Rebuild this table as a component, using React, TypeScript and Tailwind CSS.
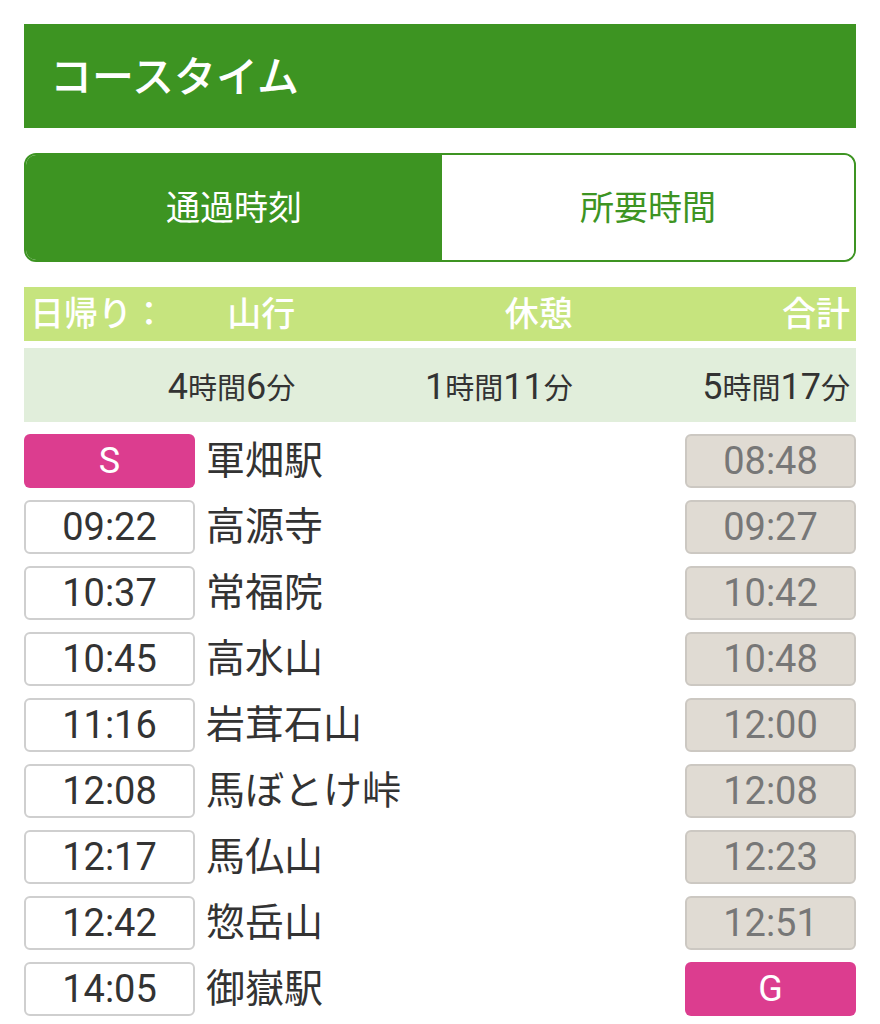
import React from 'react';

const rows = [
  { start: 'S', name: '軍畑駅', end: '08:48' },
  { start: '09:22', name: '高源寺', end: '09:27' },
  { start: '10:37', name: '常福院', end: '10:42' },
  { start: '10:45', name: '高水山', end: '10:48' },
  { start: '11:16', name: '岩茸石山', end: '12:00' },
  { start: '12:08', name: '馬ぼとけ峠', end: '12:08' },
  { start: '12:17', name: '馬仏山', end: '12:23' },
  { start: '12:42', name: '惣岳山', end: '12:51' },
  { start: '14:05', name: '御嶽駅', end: 'G' },
];

const Duration = ({ h, m }: { h: string; m: string }) => (
  <div className="flex items-baseline justify-end pr-[6px] pt-[4px] text-[#333]">
    <span className="text-[36px]">{h}</span>
    <span className="text-[29px]">時間</span>
    <span className="text-[36px]">{m}</span>
    <span className="text-[29px]">分</span>
  </div>
);

const StartBox = ({ value }: { value: string }) => {
  if (value === 'S' || value === 'G') {
    return (
      <div className="w-[171px] h-[54px] rounded-md bg-[#dc3d8f] flex items-center justify-center text-white text-[36px] leading-none">
        {value}
      </div>
    );
  }
  return (
    <div className="w-[171px] h-[54px] rounded-md border-2 border-[#cfcfcf] bg-white flex items-center justify-center text-[#333] text-[38px] leading-none">
      {value}
    </div>
  );
};

const EndBox = ({ value }: { value: string }) => {
  if (value === 'S' || value === 'G') {
    return (
      <div className="ml-auto w-[171px] h-[54px] rounded-md bg-[#dc3d8f] flex items-center justify-center text-white text-[36px] leading-none">
        {value}
      </div>
    );
  }
  return (
    <div className="ml-auto w-[171px] h-[54px] rounded-md border-2 border-[#ccc8c2] bg-[#e0dbd3] flex items-center justify-center text-[#777] text-[38px] leading-none">
      {value}
    </div>
  );
};

export default function App() {
  return (
    <div className="w-[880px] px-6 pt-6 bg-white font-['Roboto','Noto_Sans_CJK_JP',sans-serif]">
      <div className="h-[104px] bg-[#3d9422] flex items-center pl-[26px] pt-[4px] text-white text-[42px] font-medium leading-none">
        コースタイム
      </div>

      <div className="mt-[25px] h-[109px] flex rounded-xl border-2 border-[#3d9422] overflow-hidden text-[34px] leading-none">
        <div className="w-[416px] bg-[#3d9422] text-white flex items-center justify-center">通過時刻</div>
        <div className="flex-1 bg-white text-[#3d9422] flex items-center justify-center">所要時間</div>
      </div>

      <div className="mt-[25px] h-[54px] bg-[#c6e47e] grid grid-cols-3 items-center text-white text-[34px] font-medium leading-none">
        <div className="flex justify-between pl-[6px] pr-[6px]">
          <span>日帰り：</span>
          <span>山行</span>
        </div>
        <div className="text-right pr-[6px]">休憩</div>
        <div className="text-right pr-[6px]">合計</div>
      </div>

      <div className="mt-[7px] h-[74px] bg-[#e1eedb] grid grid-cols-3 items-center leading-none">
        <Duration h="4" m="6" />
        <Duration h="1" m="11" />
        <Duration h="5" m="17" />
      </div>

      <div className="mt-3">
        {rows.map((r) => (
          <div key={r.name} className="flex items-center mb-3">
            <StartBox value={r.start} />
            <div className="ml-[11px] text-[39px] text-[#333] leading-none">{r.name}</div>
            <EndBox value={r.end} />
          </div>
        ))}
      </div>
    </div>
  );
}
